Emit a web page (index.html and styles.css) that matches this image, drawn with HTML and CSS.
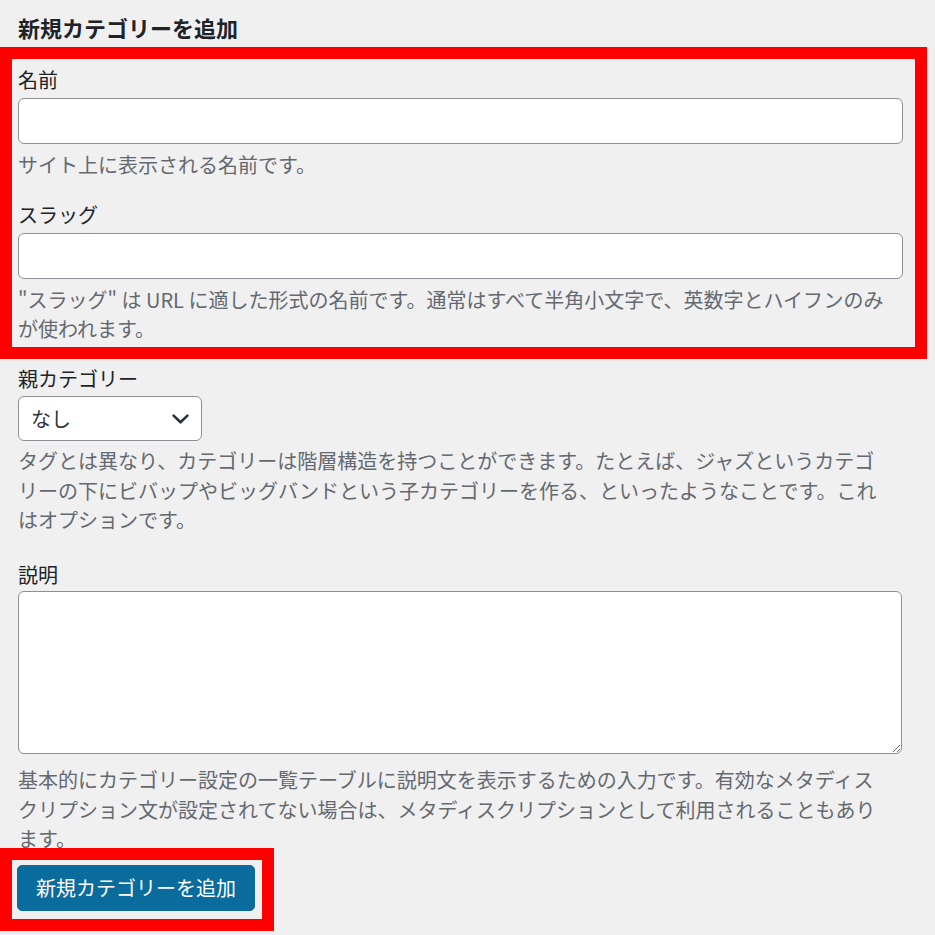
FILE: index.html
```html
<!DOCTYPE html>
<html lang="ja">
<head>
<meta charset="utf-8">
<title>新規カテゴリーを追加</title>
<link rel="stylesheet" href="styles.css">
</head>
<body>
<div class="wrap">
  <h2 class="title">新規カテゴリーを追加</h2>

  <div class="mark mark--block">
    <div class="field field--first">
      <label class="label" for="tag-name">名前</label>
      <input class="text-input" id="tag-name" type="text">
      <p class="help">サイト上に表示される名前です。</p>
    </div>
    <div class="field">
      <label class="label" for="tag-slug">スラッグ</label>
      <input class="text-input" id="tag-slug" type="text">
      <p class="help">"スラッグ" は URL に適した形式の名前です。通常はすべて半角小文字で、英数字とハイフンのみ<br>が使われます。</p>
    </div>
  </div>

  <div class="field field--parent">
    <label class="label" for="parent">親カテゴリー</label>
    <div class="select-wrap">
      <select class="select" id="parent"><option>なし</option></select>
      <svg class="chevron" width="17" height="10" viewBox="0 0 17 10" aria-hidden="true"><path d="M1.6 1.6 L8.5 8.3 L15.4 1.6" fill="none" stroke="#2c3338" stroke-width="2.6" stroke-linecap="round" stroke-linejoin="round"/></svg>
    </div>
    <p class="help">タグとは異なり、カテゴリーは階層構造を持つことができます。たとえば、ジャズというカテゴ<br>リーの下にビバップやビッグバンドという子カテゴリーを作る、といったようなことです。これ<br>はオプションです。</p>
  </div>

  <div class="field field--desc">
    <label class="label" for="desc">説明</label>
    <textarea class="textarea" id="desc"></textarea>
    <p class="help help--desc">基本的にカテゴリー設定の一覧テーブルに説明文を表示するための入力です。有効なメタディス<br>クリプション文が設定されてない場合は、メタディスクリプションとして利用されることもあり<br>ます。</p>
  </div>

  <div class="mark mark--button">
    <button class="button-primary" type="button">新規カテゴリーを追加</button>
  </div>
</div>
</body>
</html>
```

FILE: styles.css
```css
html, body {
  margin: 0;
  padding: 0;
  background: #f0f0f1;
}

body {
  font-family: "Noto Sans CJK JP", "Noto Sans", sans-serif;
  font-size: 20px;
  line-height: 29.5px;
  color: #1d2327;
}

.wrap {
  width: 885px;
  padding-left: 18px;
}

.title {
  margin: 13px 0 0;
  font-size: 22px;
  line-height: 29px;
  font-weight: 700;
  color: #1d2327;
}

.mark {
  border: 12px solid #ff0000;
  margin-left: -18px;
}

.mark--block {
  width: 885px;
  margin-top: 5px;
  padding: 6px 12px 3px 6px;
}

.mark--button {
  position: relative;
  display: inline-block;
  margin-top: -6px;
  padding: 5px 7px 8px 5px;
  background: #f0f0f1;
}

.field {
  margin-top: 21px;
}

.field--first {
  margin-top: 0;
}

.field--parent {
  margin-top: 5px;
}

.field--desc {
  margin-top: 25px;
}

.label {
  display: block;
  line-height: 29.5px;
  color: #1d2327;
}

.text-input {
  display: block;
  box-sizing: border-box;
  width: 100%;
  height: 46px;
  margin: 3px 0 0;
  padding: 0 12px;
  border: 1px solid #8c8f94;
  border-radius: 6px;
  background: #fff;
  font: inherit;
  color: #2c3338;
}

.help {
  margin: 6px 0 0;
  color: #646970;
  line-height: 29.5px;
}

.select-wrap {
  position: relative;
  width: 184px;
  margin-top: 3px;
}

.select {
  display: block;
  box-sizing: border-box;
  width: 184px;
  height: 45px;
  margin: 0;
  padding: 0 40px 0 12px;
  border: 1px solid #8c8f94;
  border-radius: 6px;
  background: #fff;
  font: inherit;
  color: #2c3338;
  -webkit-appearance: none;
  appearance: none;
}

.chevron {
  position: absolute;
  right: 13px;
  top: 18px;
  pointer-events: none;
}

.select-wrap + .help {
  margin-top: 5px;
}

.textarea {
  display: block;
  box-sizing: border-box;
  width: 884px;
  height: 163px;
  margin: 2px 0 0;
  padding: 6px 12px;
  border: 1px solid #8c8f94;
  border-radius: 6px;
  background: #fff;
  font: inherit;
  color: #2c3338;
}

.help--desc {
  margin-top: 11px;
}

.button-primary {
  display: block;
  box-sizing: border-box;
  height: 46px;
  margin: 0;
  padding: 0 18px;
  border: 1px solid #0a6b9d;
  border-radius: 5px;
  background: #0a6b9d;
  color: #fff;
  font: inherit;
  line-height: 44px;
  cursor: pointer;
}
```
